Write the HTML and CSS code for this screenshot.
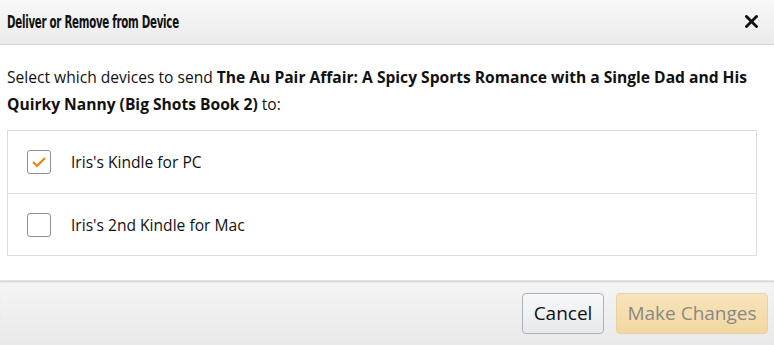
FILE: index.html
```html
<!DOCTYPE html>
<html lang="en">
<head>
    <meta charset="UTF-8">
    <title>Deliver or Remove from Device</title>
    <link rel="stylesheet" href="styles.css">
</head>
<body>
    <div class="modal">
        <div class="modal-header">
            <h2>Deliver or Remove from Device</h2>
            <button class="close-btn" aria-label="Close">
                <svg width="13" height="13" viewBox="0 0 13 13">
                    <path d="M1.5 1.5 L11.5 11.5 M11.5 1.5 L1.5 11.5" stroke="#111" stroke-width="2.8" stroke-linecap="square"/>
                </svg>
            </button>
        </div>
        <div class="modal-body">
            <p class="intro">Select which devices to send <b>The Au Pair Affair: A Spicy Sports Romance with a Single Dad and His Quirky Nanny (Big Shots Book 2)</b> to:</p>
            <div class="device-list">
                <label class="device-row">
                    <span class="checkbox checked">
                        <svg width="16" height="12" viewBox="0 0 16 12">
                            <path d="M2 6 L6 10 L14 2" fill="none" stroke="#f08218" stroke-width="2.2"/>
                        </svg>
                    </span>
                    <span class="device-name">Iris's Kindle for PC</span>
                </label>
                <label class="device-row">
                    <span class="checkbox"></span>
                    <span class="device-name">Iris's 2nd Kindle for Mac</span>
                </label>
            </div>
        </div>
        <div class="modal-footer">
            <button class="btn btn-cancel">Cancel</button>
            <button class="btn btn-primary" disabled>Make Changes</button>
        </div>
    </div>
</body>
</html>
```

FILE: styles.css
```css
* {
    margin: 0;
    padding: 0;
    box-sizing: border-box;
}

body {
    width: 774px;
    height: 345px;
    overflow: hidden;
    background: #fff;
    font-family: 'Open Sans', 'Noto Sans', sans-serif;
    color: #111;
}

.modal {
    display: flex;
    flex-direction: column;
    height: 345px;
}

.modal-header {
    height: 45px;
    display: flex;
    align-items: center;
    justify-content: space-between;
    padding: 0 16px 0 7px;
    background: linear-gradient(#f8f8f8, #ebebeb);
    border-bottom: 1px solid #d5d5d5;
}

/* condensed title face: squeeze a regular condensed font to match */
.modal-header h2 {
    font-family: 'DejaVu Sans Condensed', 'DejaVu Sans', sans-serif;
    font-stretch: condensed;
    font-size: 17px;
    font-weight: bold;
    letter-spacing: -0.4px;
    color: #111;
    margin-top: -1px;
    transform: scaleX(0.67);
    transform-origin: left center;
}

.close-btn {
    background: none;
    border: none;
    cursor: pointer;
    display: flex;
    margin-top: -1px;
}

.modal-body {
    flex: 1;
    padding: 19px 17px 0 7px;
}

.intro {
    font-size: 15.6px;
    line-height: 27px;
    margin-bottom: 12px;
}

.intro b {
    font-weight: bold;
}

.device-list {
    border: 1px solid #ddd;
}

.device-row {
    display: flex;
    align-items: center;
    height: 62px;
    padding-left: 19px;
    cursor: pointer;
}

.device-row + .device-row {
    border-top: 1px solid #ddd;
}

.checkbox {
    width: 24px;
    height: 24px;
    border: 1px solid #8d9096;
    border-radius: 3px;
    display: flex;
    justify-content: center;
    align-items: center;
    margin-right: 20px;
    background: #fff;
}

.device-name {
    font-size: 15.6px;
}

.modal-footer {
    height: 65px;
    display: flex;
    justify-content: flex-end;
    align-items: center;
    gap: 12px;
    padding-right: 6px;
    background: linear-gradient(#f5f5f5, #e9e9e9);
    box-shadow: inset 0 2px 2px -1px #d0d0d0;
    border-top: 1px solid #e2e2e2;
}

.btn {
    height: 41px;
    border-radius: 4px;
    font-family: 'Open Sans', 'Noto Sans', sans-serif;
    font-size: 19px;
    cursor: pointer;
    flex-shrink: 0;
}

.btn-cancel {
    width: 82px;
    background: linear-gradient(#f7f8fa, #e7e9ec);
    border: 1px solid #adb1b8;
    color: #111;
}

.btn-primary {
    width: 152px;
    background: linear-gradient(#f7e4bb, #f2d8a0);
    border: 1px solid #e5d3a5;
    color: #888;
    cursor: default;
}
```
